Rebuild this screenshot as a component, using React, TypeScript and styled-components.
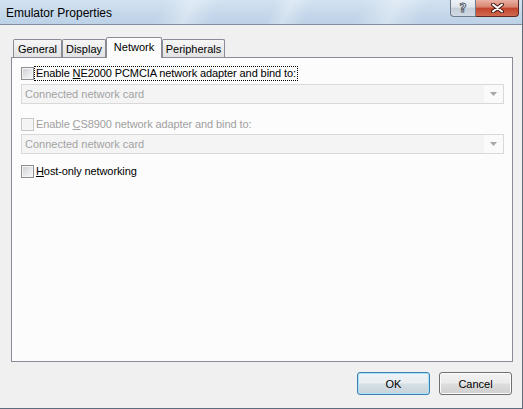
import React from "react";
import styled, { createGlobalStyle } from "styled-components";

const GlobalStyle = createGlobalStyle`
  html, body { margin: 0; padding: 0; background: #f0f0f0; }
  body { font-family: "Liberation Sans", Arial, sans-serif; font-size: 11px; color: #000; }
  * { box-sizing: border-box; }
`;

const Window = styled.div`
  width: 523px;
  height: 409px;
  display: flex;
  flex-direction: column;
  background: #f0f0f0;
  border-right: 1px solid #5d6d7e;
  border-bottom: 1px solid #5d6d7e;
`;

const TitleBar = styled.div`
  height: 25px;
  display: flex;
  justify-content: space-between;
  align-items: flex-start;
  padding: 0 3px 0 6px;
  border-bottom: 1px solid #7f8fa1;
  background:
    linear-gradient(115deg,
      rgba(255,255,255,0) 0px, rgba(255,255,255,0) 150px,
      rgba(255,255,255,0.35) 175px, rgba(255,255,255,0) 200px,
      rgba(255,255,255,0) 250px, rgba(255,255,255,0.3) 265px,
      rgba(255,255,255,0) 285px, rgba(255,255,255,0) 330px,
      rgba(255,255,255,0.35) 360px, rgba(255,255,255,0) 390px,
      rgba(255,255,255,0) 520px),
    linear-gradient(180deg, #d3e2f1 0%, #c4d7ea 60%, #bdd2e7 100%);
`;

const Title = styled.div`
  font-size: 12px;
  line-height: 26px;
  color: #000;
`;

const Controls = styled.div`
  display: flex;
`;

const HelpButton = styled.div`
  width: 26px;
  height: 17px;
  border: 1px solid #6e7c8b;
  border-top: none;
  border-radius: 0 0 0 4px;
  background: linear-gradient(180deg, #eef2f6 0%, #dde4eb 45%, #c4ced9 50%, #d2dbe4 100%);
  display: flex;
  align-items: center;
  justify-content: center;
  font-family: "DejaVu Sans", sans-serif;
  font-weight: bold;
  font-size: 12px;
  color: #f4f6f8;
  -webkit-text-stroke: 1px #56616d;
`;

const CloseButton = styled.div`
  width: 43px;
  height: 17px;
  border: 1px solid #5b2a22;
  border-left: none;
  border-top: none;
  border-radius: 0 0 4px 0;
  background: linear-gradient(180deg, #e9b1a4 0%, #d9836f 45%, #c2432c 50%, #d06a4f 100%);
  display: flex;
  align-items: center;
  justify-content: center;
`;

const Body = styled.div`
  flex: 1;
  display: flex;
  flex-direction: column;
  padding: 12px 9px 13px 11px;
`;

const TabStrip = styled.div`
  height: 20px;
  display: flex;
  align-items: flex-end;
  padding-left: 2px;
  position: relative;
  z-index: 1;
`;

const Tab = styled.div<{ $active?: boolean; $w: number }>`
  width: ${(p) => p.$w}px;
  height: ${(p) => (p.$active ? 21 : 18)}px;
  margin-bottom: ${(p) => (p.$active ? -1 : 0)}px;
  border: 1px solid #898c95;
  border-bottom: none;
  border-radius: 2px 2px 0 0;
  background: ${(p) =>
    p.$active ? "#fcfcfc" : "linear-gradient(180deg, #f6f6f6 0%, #ececec 50%, #e2e2e2 100%)"};
  display: flex;
  align-items: center;
  justify-content: center;
  padding-bottom: ${(p) => (p.$active ? 3 : 0)}px;
  font-size: 11px;
`;

const Panel = styled.div`
  flex: 1;
  border: 1px solid #898c95;
  background: #fcfcfc;
  padding: 8px 8px 0 9px;
  display: flex;
  flex-direction: column;
`;

const Row = styled.div<{ $mt?: number; $disabled?: boolean }>`
  height: 15px;
  margin-top: ${(p) => p.$mt ?? 0}px;
  display: flex;
  align-items: center;
  color: ${(p) => (p.$disabled ? "#a0a0a0" : "#000")};
`;

const CheckBox = styled.span<{ $disabled?: boolean }>`
  width: 13px;
  height: 13px;
  flex: none;
  border: 1px solid ${(p) => (p.$disabled ? "#c6c6c6" : "#8e8f8f")};
  background: ${(p) =>
    p.$disabled
      ? "#f4f4f4"
      : "linear-gradient(135deg, #c9ccd1 0%, #e4e6e8 50%, #f8f8f8 100%)"};
  box-shadow: inset 0 0 0 1px ${(p) => (p.$disabled ? "#f7f7f7" : "#f4f4f4")};
`;

const Label = styled.span<{ $focus?: boolean }>`
  border: 1px dotted ${(p) => (p.$focus ? "#000" : "transparent")};
  padding: 0 1px;
  line-height: 13px;
  letter-spacing: -0.1px;
  white-space: nowrap;
`;

const Key = styled.span`
  text-decoration: underline;
`;

const Combo = styled.div<{ $mt?: number }>`
  height: 20px;
  margin-top: ${(p) => p.$mt ?? 0}px;
  border: 1px solid #d9d9d9;
  background: #f4f4f4;
  display: flex;
  align-items: stretch;
`;

const ComboText = styled.div`
  flex: 1;
  padding-left: 3px;
  display: flex;
  align-items: center;
  color: #a3a3a3;
`;

const ComboArrow = styled.div`
  width: 19px;
  background: #fafafa;
  display: flex;
  align-items: center;
  justify-content: center;
`;

const ButtonRow = styled.div`
  margin-top: 10px;
  display: flex;
  justify-content: flex-end;
  gap: 9px;
  padding-right: 1px;
`;

const Button = styled.div<{ $default?: boolean }>`
  width: 73px;
  height: 23px;
  border: 1px solid ${(p) => (p.$default ? "#3c7fb1" : "#707070")};
  border-radius: 3px;
  box-shadow: inset 0 0 0 1px ${(p) => (p.$default ? "#a8e4f8" : "#fbfbfb")};
  background: ${(p) =>
    p.$default
      ? "linear-gradient(180deg, #eef3f6 0%, #e7edf1 48%, #d6dfe5 52%, #c8d3da 100%)"
      : "linear-gradient(180deg, #f2f2f2 0%, #ebebeb 48%, #dddddd 52%, #cfcfcf 100%)"};
  display: flex;
  align-items: center;
  justify-content: center;
  font-size: 11px;
  color: #000;
`;

const DropArrow = () => (
  <svg width="7" height="4" viewBox="0 0 7 4">
    <path d="M0 0 H7 L3.5 4 Z" fill="#a6a6a6" />
  </svg>
);

const CloseGlyph = () => (
  <svg width="15" height="10" viewBox="0 0 15 10">
    <path d="M3 1.5 L12 8.5 M12 1.5 L3 8.5" stroke="#4a1d16" strokeWidth="4" strokeLinecap="round" />
    <path d="M3 1.5 L12 8.5 M12 1.5 L3 8.5" stroke="#ffffff" strokeWidth="2" strokeLinecap="round" />
  </svg>
);

export default function App() {
  return (
    <>
      <GlobalStyle />
      <Window>
        <TitleBar>
          <Title>Emulator Properties</Title>
          <Controls>
            <HelpButton>?</HelpButton>
            <CloseButton>
              <CloseGlyph />
            </CloseButton>
          </Controls>
        </TitleBar>
        <Body>
          <TabStrip>
            <Tab $w={49}>General</Tab>
            <Tab $w={44}>Display</Tab>
            <Tab $w={56} $active>Network</Tab>
            <Tab $w={63}>Peripherals</Tab>
          </TabStrip>
          <Panel>
            <Row>
              <CheckBox />
              <Label $focus>
                Enable <Key>N</Key>E2000 PCMCIA network adapter and bind to:
              </Label>
            </Row>
            <Combo $mt={3}>
              <ComboText>Connected network card</ComboText>
              <ComboArrow>
                <DropArrow />
              </ComboArrow>
            </Combo>
            <Row $mt={13} $disabled>
              <CheckBox $disabled />
              <Label>
                Enable <Key>C</Key>S8900 network adapter and bind to:
              </Label>
            </Row>
            <Combo $mt={2}>
              <ComboText>Connected network card</ComboText>
              <ComboArrow>
                <DropArrow />
              </ComboArrow>
            </Combo>
            <Row $mt={10}>
              <CheckBox />
              <Label>
                <Key>H</Key>ost-only networking
              </Label>
            </Row>
          </Panel>
          <ButtonRow>
            <Button $default>OK</Button>
            <Button>Cancel</Button>
          </ButtonRow>
        </Body>
      </Window>
    </>
  );
}
